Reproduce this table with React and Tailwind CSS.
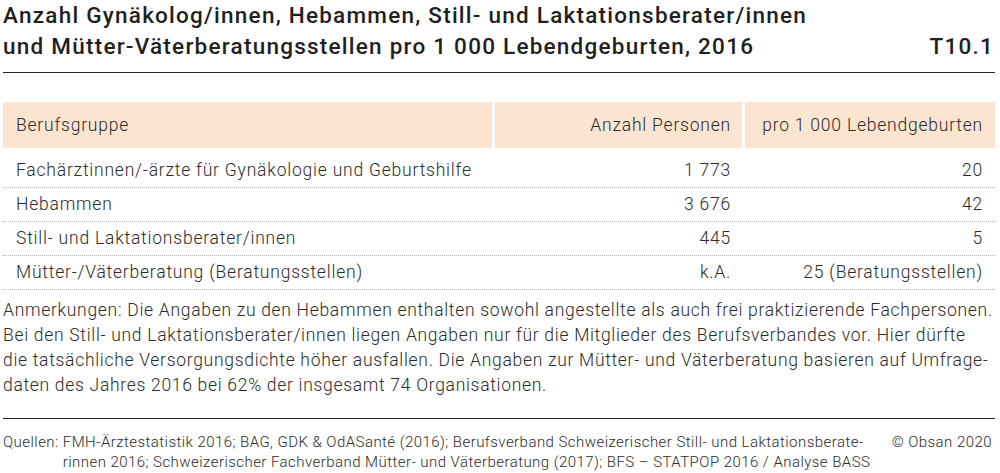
import React from 'react';

const rows = [
  { label: 'Fachärztinnen/-ärzte für Gynäkologie und Geburtshilfe', count: '1 773', rate: '20' },
  { label: 'Hebammen', count: '3 676', rate: '42' },
  { label: 'Still- und Laktationsberater/innen', count: '445', rate: '5' },
  { label: 'Mütter-/Väterberatung (Beratungsstellen)', count: 'k.A.', rate: '25 (Beratungsstellen)' },
];

export default function App() {
  return (
    <div className="w-[1000px] h-[473px] bg-white overflow-hidden pl-[3px] pr-[5px] text-[#2b2b2b]" style={{ fontFamily: 'Roboto, "Liberation Sans", sans-serif' }}>
      {/* Title */}
      <div className="flex items-end justify-between text-[22.5px] leading-[31px] tracking-[0.055em] font-medium text-[#1f1f1f]">
        <h1>
          Anzahl Gynäkolog/innen, Hebammen, Still- und Laktationsberater/innen
          <br />
          und Mütter-Väterberatungsstellen pro 1 000 Lebendgeburten, 2016
        </h1>
        <span className="pr-[1px]">T10.1</span>
      </div>
      <div className="mt-[10px] h-px bg-[#2a2a2a]" />

      {/* Table */}
      <div className="mt-[29px] font-light text-[17.5px] tracking-[0.045em]">
        <div className="grid grid-cols-[489px_247px_250px] gap-x-[3px] h-[46px]">
          <div className="bg-[#fce5d0] flex items-center pl-[13px]">Berufsgruppe</div>
          <div className="bg-[#fce5d0] flex items-center justify-end pr-[11px]">Anzahl Personen</div>
          <div className="bg-[#fce5d0] flex items-center justify-end pr-[12px]">pro 1 000 Lebendgeburten</div>
        </div>
        <div className="mt-[6px]">
          {rows.map((r) => (
            <div key={r.label} className="grid grid-cols-[489px_247px_250px] gap-x-[3px] h-[34px] border-b border-dotted border-[#b5b5b5]">
              <div className="flex items-center pl-[13px]">{r.label}</div>
              <div className="flex items-center justify-end pr-[11px]">{r.count}</div>
              <div className="flex items-center justify-end pr-[12px]">{r.rate}</div>
            </div>
          ))}
        </div>
      </div>

      {/* Notes */}
      <p className="mt-[8px] font-light text-[17.5px] tracking-[0.04em] leading-[25px] whitespace-nowrap">
        Anmerkungen: Die Angaben zu den Hebammen enthalten sowohl angestellte als auch frei praktizierende Fachpersonen.
        <br />
        Bei den Still- und Laktationsberater/innen liegen Angaben nur für die Mitglieder des Berufsverbandes vor. Hier dürfte
        <br />
        die tatsächliche Versorgungsdichte höher ausfallen. Die Angaben zur Mütter- und Väterberatung basieren auf Umfrage-
        <br />
        daten des Jahres 2016 bei 62% der insgesamt 74 Organisationen.
      </p>
      <div className="mt-[20px] h-px bg-[#2a2a2a]" />

      {/* Sources */}
      <div className="mt-[13px] flex font-light text-[15px] tracking-[0.03em] leading-[20px] whitespace-nowrap">
        <span className="shrink-0">Quellen:&nbsp;</span>
        <p className="flex-1">
          FMH-Ärztestatistik 2016; BAG, GDK &amp; OdASanté (2016); Berufsverband Schweizerischer Still- und Laktationsberate-
          <br />
          rinnen 2016; Schweizerischer Fachverband Mütter- und Väterberatung (2017); BFS – STATPOP 2016 / Analyse BASS
        </p>
        <span className="shrink-0 pr-[3px]">© Obsan 2020</span>
      </div>
    </div>
  );
}
